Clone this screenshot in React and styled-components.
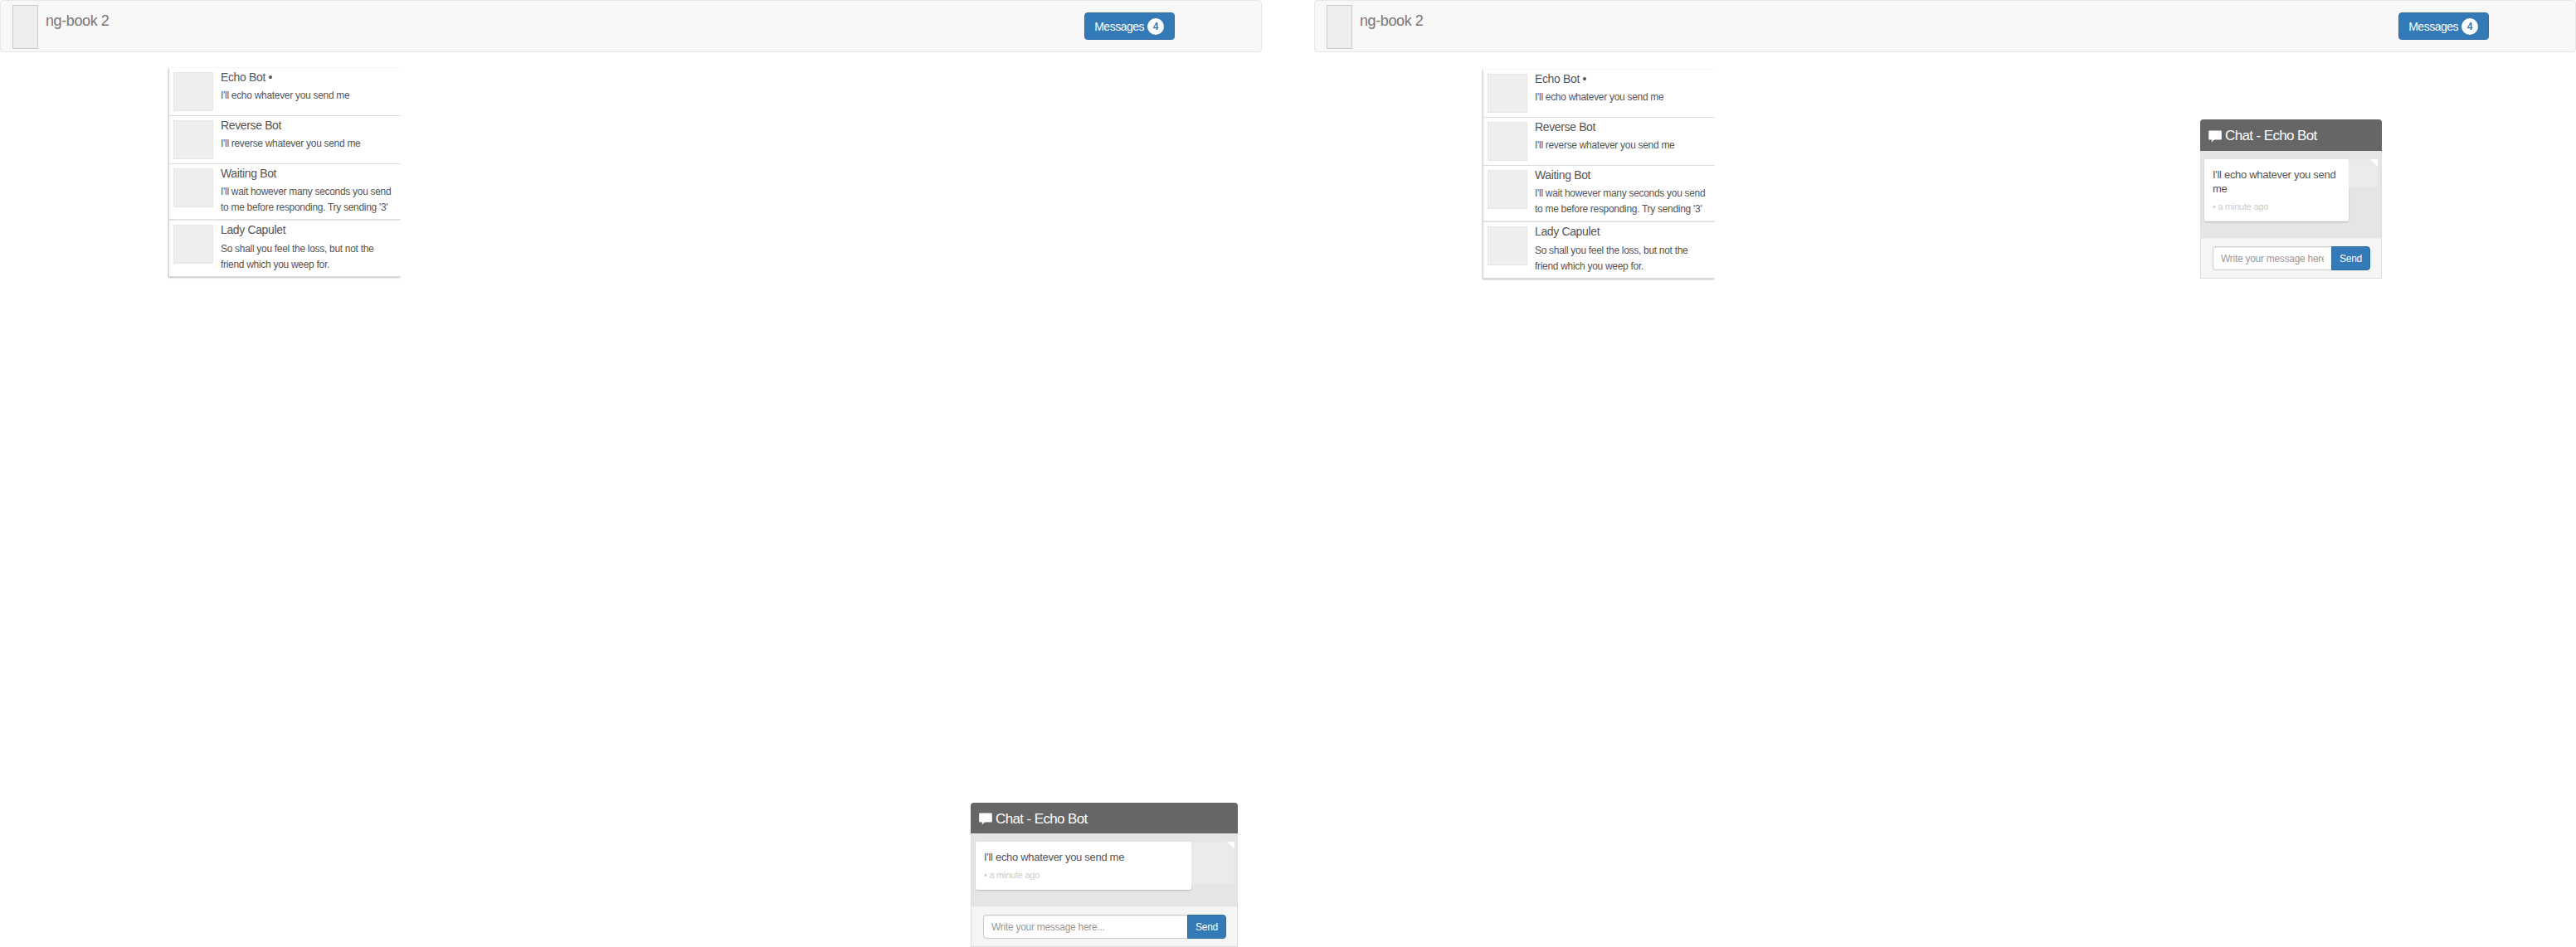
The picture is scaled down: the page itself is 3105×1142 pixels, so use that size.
import React from "react";
import styled, { createGlobalStyle } from "styled-components";

const Global = createGlobalStyle`
  html, body { margin: 0; padding: 0; background: #fff; overflow: hidden; }
  body { font-family: "Liberation Sans", Arial, sans-serif; font-size: 14px; color: #333; }
  * { box-sizing: border-box; }
`;

const Desktop = styled.div`
  display: flex;
  gap: 63px;
  width: 3105px;
  height: 1142px;
`;

const Page = styled.div`
  position: relative;
  flex: 0 0 1521px;
  height: 1142px;
`;

const Navbar = styled.nav`
  display: flex;
  align-items: flex-start;
  height: 63px;
  padding: 5px 104px 0 14px;
  background: #f8f8f8;
  border: 1px solid #e7e7e7;
  border-radius: 4px;
`;

const Logo = styled.div`
  width: 31px;
  height: 53px;
  background: #eee;
  border: 1px solid #ccc;
`;

const Brand = styled.div`
  margin: 9px 0 0 9px;
  font-size: 18px;
  letter-spacing: -0.4px;
  line-height: 20px;
  color: #777;
`;

const NavButton = styled.button`
  display: flex;
  align-items: center;
  gap: 4px;
  height: 33px;
  margin: 9px 0 0 auto;
  padding: 0 12px 0 11px;
  background: #337ab7;
  border: 1px solid #2e6da4;
  border-radius: 4px;
  color: #fff;
  font: 14px "Liberation Sans", Arial, sans-serif;
  letter-spacing: -0.5px;
`;

const Badge = styled.span`
  min-width: 20px;
  height: 20px;
  border-radius: 10px;
  background: #fff;
  color: #337ab7;
  font-size: 12px;
  font-weight: 700;
  letter-spacing: 0;
  line-height: 20px;
  text-align: center;
`;

const ThreadList = styled.ul`
  width: 279px;
  margin: ${(p) => p.$top}px 0 0 204px;
  padding: 0;
  list-style: none;
  background: #fff;
  box-shadow: -1px 1px 2px rgba(0, 0, 0, 0.25), 0 0 1px rgba(0, 0, 0, 0.15);
  clip-path: inset(-5px 0 -5px -5px);
`;

const ThreadRow = styled.li`
  display: flex;
  height: ${(p) => p.$height}px;
  padding: 5px 0 0 5px;
  border-bottom: ${(p) => (p.$thick ? "2px solid #e4e4e4" : "1px solid #ddd")};
`;

const ThreadAvatar = styled.div`
  flex: none;
  width: 48px;
  height: 47px;
  background: #eee;
  border: 1px solid #e6e6e6;
`;

const ThreadBody = styled.div`
  margin-left: 9px;
  padding-right: 6px;
  min-width: 0;
`;

const ThreadName = styled.div`
  margin-top: -2px;
  font-size: 14px;
  letter-spacing: -0.36px;
  line-height: 16px;
  color: #555;
`;

const ThreadText = styled.div`
  margin-top: ${(p) => p.$gap}px;
  font-size: 12px;
  letter-spacing: -0.3px;
  line-height: 19px;
  color: #555;
`;

const ChatWindow = styled.section`
  position: absolute;
  left: ${(p) => p.$left}px;
  top: ${(p) => p.$top}px;
  width: ${(p) => p.$width}px;
  height: ${(p) => p.$height}px;
  display: flex;
  flex-direction: column;
  border: 1px solid #ddd;
  border-top: 0;
  border-radius: 4px 4px 0 0;
  background: #f5f5f5;
`;

const ChatHeader = styled.header`
  display: flex;
  align-items: center;
  gap: 4px;
  height: ${(p) => p.$height}px;
  margin: 0 -1px;
  padding: 2px 10px 0;
  background: #666;
  border-radius: 4px 4px 0 0;
  color: #fff;
  font-size: 17px;
  letter-spacing: -0.62px;
`;

const ChatIcon = styled.svg`
  flex: none;
  width: 16px;
  height: 15px;
  fill: #fff;
`;

const MessageArea = styled.div`
  display: flex;
  align-items: flex-start;
  flex: 1;
  padding: 10px ${(p) => p.$padRight}px 0 ${(p) => p.$padLeft}px;
  background: #e5e5e5;
`;

const Bubble = styled.div`
  flex: 1;
  height: ${(p) => p.$height}px;
  padding: 10px;
  background: #fff;
  border-radius: 2px;
  box-shadow: 0 1px 2px rgba(0, 0, 0, 0.2);
`;

const BubbleText = styled.div`
  font-size: 13px;
  letter-spacing: -0.3px;
  line-height: 17px;
  color: #555;
`;

const BubbleTime = styled.div`
  margin-top: 6px;
  font-size: 11px;
  letter-spacing: -0.25px;
  line-height: 14px;
  color: #ccc;
`;

const MessageAvatar = styled.div`
  position: relative;
  flex: none;
  width: ${(p) => p.$width}px;
  height: ${(p) => p.$height}px;
  background: #ebebeb;
  border: 1px solid #e8e8e8;
  border-left: 0;
  &::after {
    content: "";
    position: absolute;
    top: -1px;
    right: -1px;
    border-style: solid;
    border-width: 0 9px 9px 0;
    border-color: transparent #fff transparent transparent;
  }
`;

const Composer = styled.form`
  display: flex;
  height: 48px;
  flex: none;
  padding: 9px 13px 0 14px;
  border-top: 1px solid #eee;
`;

const ComposerInput = styled.input`
  flex: 1;
  min-width: 0;
  height: 29px;
  padding: 0 9px;
  background: #fff;
  border: 1px solid #ccc;
  border-right: 0;
  border-radius: 4px 0 0 4px;
  box-shadow: inset 0 1px 1px rgba(0, 0, 0, 0.075);
  color: #555;
  font: 12px "Liberation Sans", Arial, sans-serif;
  letter-spacing: -0.28px;
  &::placeholder { color: #999; opacity: 1; }
`;

const SendButton = styled.button`
  flex: none;
  width: 47px;
  height: 29px;
  padding: 0;
  background: #337ab7;
  border: 1px solid #2e6da4;
  border-radius: 0 4px 4px 0;
  color: #fff;
  font: 12px "Liberation Sans", Arial, sans-serif;
  letter-spacing: -0.3px;
`;

const threads = [
  { name: "Echo Bot •", text: "I'll echo whatever you send me", height: 58, gap: 5 },
  { name: "Reverse Bot", text: "I'll reverse whatever you send me", height: 58, gap: 5 },
  { name: "Waiting Bot", text: "I'll wait however many seconds you send to me before responding. Try sending '3'", height: 68, gap: 5, thick: true },
  { name: "Lady Capulet", text: "So shall you feel the loss, but not the friend which you weep for.", height: 68, gap: 6 },
];

function CommentIcon() {
  return (
    <ChatIcon viewBox="0 0 16 15">
      <path d="M1.2 0.5h13.6c.6 0 1 .4 1 1v9c0 .6-.4 1-1 1H7.2L3.6 14.6l.5-3.1H1.2c-.6 0-1-.4-1-1v-9c0-.6.4-1 1-1z" />
    </ChatIcon>
  );
}

function Screen({ listTop, chat }) {
  return (
    <Page>
      <Navbar>
        <Logo />
        <Brand>ng-book 2</Brand>
        <NavButton type="button">
          Messages <Badge>4</Badge>
        </NavButton>
      </Navbar>
      <ThreadList $top={listTop}>
        {threads.map((t) => (
          <ThreadRow key={t.name} $height={t.height} $thick={t.thick}>
            <ThreadAvatar />
            <ThreadBody>
              <ThreadName>{t.name}</ThreadName>
              <ThreadText $gap={t.gap}>{t.text}</ThreadText>
            </ThreadBody>
          </ThreadRow>
        ))}
      </ThreadList>
      <ChatWindow $left={chat.left} $top={chat.top} $width={chat.width} $height={chat.height}>
        <ChatHeader $height={chat.header}>
          <CommentIcon />
          Chat - Echo Bot
        </ChatHeader>
        <MessageArea $padLeft={chat.padLeft} $padRight={chat.padRight}>
          <Bubble $height={chat.bubble}>
            <BubbleText>I'll echo whatever you send me</BubbleText>
            <BubbleTime>• a minute ago</BubbleTime>
          </Bubble>
          <MessageAvatar $width={chat.avatarW} $height={chat.avatarH} />
        </MessageArea>
        <Composer>
          <ComposerInput placeholder="Write your message here..." readOnly />
          <SendButton type="button">Send</SendButton>
        </Composer>
      </ChatWindow>
    </Page>
  );
}

export default function App() {
  return (
    <>
      <Global />
      <Desktop>
        <Screen
          listTop={19}
          chat={{ left: 1170, top: 968, width: 322, height: 174, header: 37, bubble: 58, avatarW: 52, avatarH: 52, padLeft: 5, padRight: 3 }}
        />
        <Screen
          listTop={21}
          chat={{ left: 1068, top: 144, width: 219, height: 192, header: 38, bubble: 75, avatarW: 35, avatarH: 34, padLeft: 4, padRight: 4 }}
        />
      </Desktop>
    </>
  );
}
